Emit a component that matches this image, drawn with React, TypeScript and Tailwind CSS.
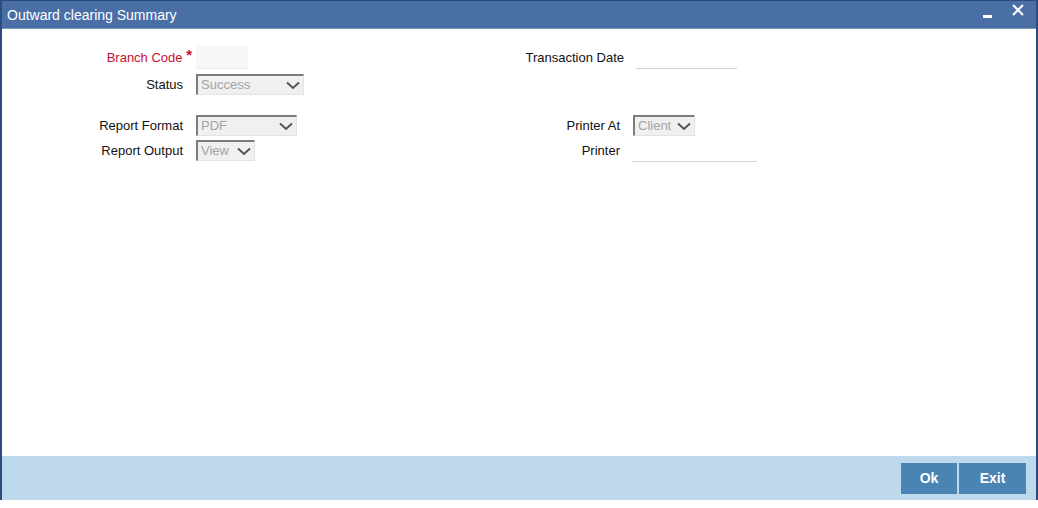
import React from "react";

function Chevron() {
  return (
    <svg width="14" height="9" viewBox="0 0 14 9" className="shrink-0">
      <path d="M1 1.5 L7 7 L13 1.5" fill="none" stroke="#555" strokeWidth="2" />
    </svg>
  );
}

function Select({ value, w }: { value: string; w: string }) {
  return (
    <div
      className={`${w} h-[21px] flex items-center justify-between pl-[3px] pr-[3px] bg-[#f0f0f0] border-l-2 border-t-2 border-r border-b border-t-[#7c7c7c] border-l-[#7c7c7c] border-r-[#e2e2e2] border-b-[#e2e2e2] text-[13px] text-[#a3a3a3]`}
    >
      <span className="-mt-[1px]">{value}</span>
      <Chevron />
    </div>
  );
}

export default function App() {
  return (
    <div className="w-[1038px] h-[508px] bg-white" style={{ fontFamily: '"Liberation Sans", Arial, sans-serif' }}>
      <div className="w-[1038px] h-[500px] flex flex-col border-l-2 border-r-2 border-t border-[#2c4c7f]">
        <div className="h-[28px] shrink-0 bg-[#4a6fa6] border-b border-[#7f98ae] flex items-center justify-between pl-[5px] pr-[12px]">
          <span className="text-white text-[14px] leading-none">Outward clearing Summary</span>
          <div className="flex items-center gap-[20px]">
            <div className="w-[9px] h-[3px] bg-white mt-[4px]" />
            <svg width="12" height="12" viewBox="0 0 12 12" className="-mt-[9px]">
              <path d="M1 1 L11 11 M11 1 L1 11" stroke="white" strokeWidth="2" />
            </svg>
          </div>
        </div>
        <div className="flex-1 flex flex-col text-[13px] text-[#111]">
          <div className="flex pt-[17px]">
            <div className="w-[500px] shrink-0 flex flex-col gap-[5px]">
              <div className="flex items-center h-[23px]">
                <div className="w-[194px] text-right pr-[4px] text-[#c8102e]">
                  Branch Code <span className="text-[#c8102e] text-[15px] font-bold relative -top-[2px]">*</span>
                </div>
                <div className="w-[52px] h-[23px] bg-[#f7f7f7] border-b border-[#ececec]" />
              </div>
              <div className="flex items-center h-[21px]">
                <div className="w-[194px] text-right pr-[13px]">Status</div>
                <Select value="Success" w="w-[108px]" />
              </div>
            </div>
            <div className="flex h-[23px] items-center">
              <div className="w-[122px] text-right whitespace-nowrap">Transaction Date</div>
              <div className="ml-[12px] w-[101px] h-[23px] border-b border-[#d4d4d4]" />
            </div>
          </div>
          <div className="flex pt-[20px]">
            <div className="w-[500px] shrink-0 flex flex-col gap-[4px]">
              <div className="flex items-center h-[21px]">
                <div className="w-[194px] text-right pr-[13px]">Report Format</div>
                <Select value="PDF" w="w-[101px]" />
              </div>
              <div className="flex items-center h-[21px]">
                <div className="w-[194px] text-right pr-[13px]">Report Output</div>
                <Select value="View" w="w-[59px]" />
              </div>
            </div>
            <div className="flex flex-col gap-[4px]">
              <div className="flex items-center h-[21px]">
                <div className="w-[118px] text-right whitespace-nowrap">Printer At</div>
                <div className="ml-[13px]">
                  <Select value="Client" w="w-[62px]" />
                </div>
              </div>
              <div className="flex items-center h-[21px]">
                <div className="w-[118px] text-right">Printer</div>
                <div className="ml-[12px] w-[125px] h-[22px] border-b border-[#d4d4d4]" />
              </div>
            </div>
          </div>
        </div>
        <div className="h-[44px] shrink-0 bg-[#bed9ec] flex items-center justify-end pr-[10px] gap-[2px]">
          <button className="w-[56px] h-[31px] bg-[#4a84b4] text-white text-[14px] font-bold">Ok</button>
          <button className="w-[67px] h-[31px] bg-[#4a84b4] text-white text-[14px] font-bold">Exit</button>
        </div>
      </div>
    </div>
  );
}
